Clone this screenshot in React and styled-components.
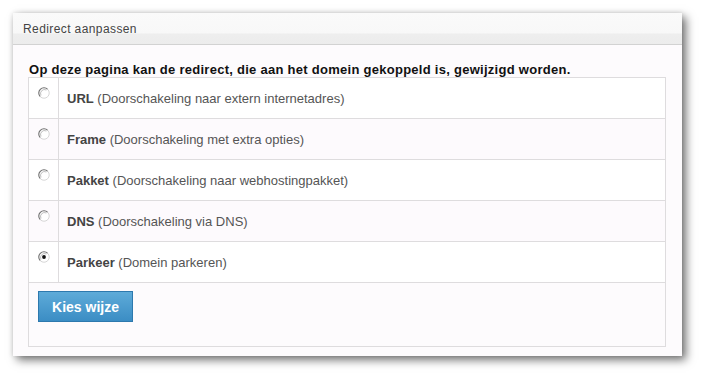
import React from "react";
import styled, { createGlobalStyle } from "styled-components";

const GlobalStyle = createGlobalStyle`
  html, body {
    margin: 0;
    padding: 0;
    background: #ffffff;
  }
  body {
    font-family: "Liberation Sans", Arial, sans-serif;
  }
`;

const options = [
  { id: "url", title: "URL", desc: "(Doorschakeling naar extern internetadres)" },
  { id: "frame", title: "Frame", desc: "(Doorschakeling met extra opties)" },
  { id: "pakket", title: "Pakket", desc: "(Doorschakeling naar webhostingpakket)" },
  { id: "dns", title: "DNS", desc: "(Doorschakeling via DNS)" },
  { id: "parkeer", title: "Parkeer", desc: "(Domein parkeren)" },
];

const Radio = ({ checked }) => (
  <svg width="12" height="12" viewBox="0 0 12 12">
    <circle cx="6" cy="6" r="5" fill="#ffffff" />
    <path d="M2.3 9.7 A5 5 0 0 1 9.7 2.3" fill="none" stroke="#6e6e6e" strokeWidth="1.1" />
    <path d="M9.7 2.3 A5 5 0 0 1 2.3 9.7" fill="none" stroke="#d6d6d6" strokeWidth="1" />
    <path d="M3 8.4 A4 4 0 0 1 8.4 3" fill="none" stroke="#b0b0b0" strokeWidth="0.8" />
    {checked && <circle cx="6" cy="6" r="1.9" fill="#111111" />}
  </svg>
);

const App = () => {
  const selected = "parkeer";
  return (
    <>
      <GlobalStyle />
      <Page>
        <Window>
          <TitleBar>Redirect aanpassen</TitleBar>
          <Content>
            <Intro>
              Op deze pagina kan de redirect, die aan het domein gekoppeld is, gewijzigd worden.
            </Intro>
            <OptionTable>
              {options.map((o, i) => (
                <OptionRow key={o.id} $alt={i % 2 === 1}>
                  <RadioCell>
                    <Radio checked={o.id === selected} />
                  </RadioCell>
                  <LabelCell>
                    <strong>{o.title}</strong>&nbsp;{o.desc}
                  </LabelCell>
                </OptionRow>
              ))}
              <ButtonRow>
                <SubmitButton type="button">Kies wijze</SubmitButton>
              </ButtonRow>
            </OptionTable>
          </Content>
        </Window>
      </Page>
    </>
  );
};

export default App;

const Page = styled.div`
  min-height: 376px;
  box-sizing: border-box;
  padding: 13px 0 0 13px;
`;

const Window = styled.div`
  width: 669px;
  height: 343px;
  background: #fdfbfd;
  box-shadow: 4px 4px 9px rgba(0, 0, 0, 0.55), 0 0 5px rgba(0, 0, 0, 0.12);
  display: flex;
  flex-direction: column;
`;

const TitleBar = styled.div`
  height: 32px;
  box-sizing: border-box;
  padding: 1px 0 0 10px;
  display: flex;
  align-items: center;
  font-size: 12px;
  letter-spacing: 0.4px;
  color: #444444;
  background: linear-gradient(#fafafa 0, #f8f8f8 64%, #eeeeee 68%, #ececec 100%);
  border-bottom: 1px solid #d2d2d2;
`;

const Content = styled.div`
  padding: 17px 16px 8px 15px;
`;

const Intro = styled.div`
  font-size: 13px;
  line-height: 15px;
  font-weight: bold;
  letter-spacing: 0.27px;
  color: #111111;
  padding-left: 1px;
  white-space: nowrap;
`;

const OptionTable = styled.div`
  border: 1px solid #dedcde;
  display: flex;
  flex-direction: column;
`;

const OptionRow = styled.div`
  display: grid;
  grid-template-columns: 30px 1fr;
  height: 41px;
  box-sizing: border-box;
  border-bottom: 1px solid #dedcde;
  background: ${(p) => (p.$alt ? "#fdfafd" : "#ffffff")};
`;

const RadioCell = styled.div`
  border-right: 1px solid #dedcde;
  padding: 7px 0 0 9px;
`;

const LabelCell = styled.div`
  display: flex;
  align-items: center;
  padding: 1px 0 0 8px;
  font-size: 13px;
  color: #555555;
  white-space: nowrap;

  strong {
    color: #444444;
    font-weight: bold;
  }
`;

const ButtonRow = styled.div`
  height: 63px;
  box-sizing: border-box;
  padding: 8px 9px;
  background: #fdfbfd;
`;

const SubmitButton = styled.button`
  width: 95px;
  height: 31px;
  box-sizing: border-box;
  border: 1px solid #2d79ae;
  background: linear-gradient(#5eabd9, #3b8dc4);
  color: #ffffff;
  font-family: "Liberation Sans", Arial, sans-serif;
  font-size: 14px;
  font-weight: bold;
  padding: 0;
  cursor: pointer;
`;
